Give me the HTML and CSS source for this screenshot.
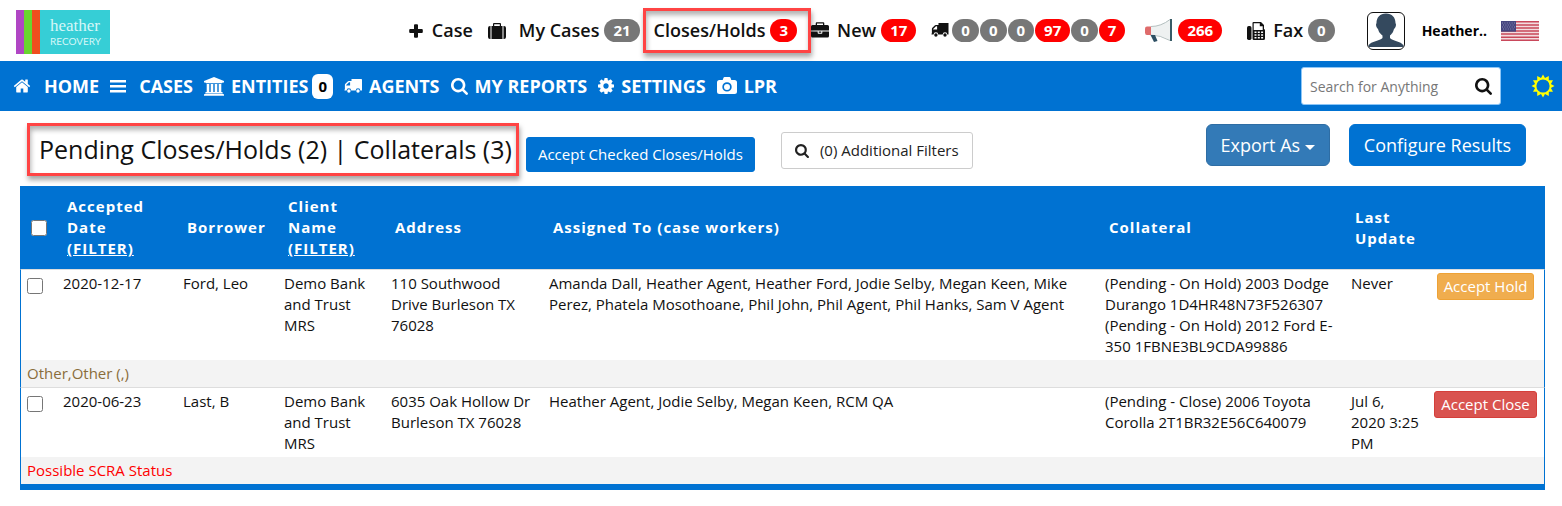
FILE: index.html
```html
<!DOCTYPE html>
<html lang="en">

<head>
<meta charset="UTF-8" />
<meta name="viewport" content="width=device-width, initial-scale=1.0" />
<title>Pending Closes/Holds</title>
<link rel="stylesheet" href="styles.css">
</head>

<body>
<header class="topbar">
<a href="#" class="logo">
<span class="stripe purple"></span><span class="stripe green"></span><span class="stripe orange"></span>
<span class="logo-text"><span class="logo-name">heather</span><span class="logo-sub">RECOVERY</span></span>
</a>

<div class="toplinks">
<a href="#" class="toplink add-case">
<svg width="14" height="14" viewBox="0 0 14 14"><path d="M5 1.200q0-1 1-1h2q1 0 1 1V5h3.800q1 0 1 1v2q0 1-1 1H9v3.800q0 1-1 1H6q-1 0-1-1V9H1.200q-1 0-1-1V6q0-1 1-1H5z"/></svg>
Case</a>
<a href="#" class="toplink my-cases">
<svg width="18" height="18" viewBox="0 0 18 18"><path d="M2.500 4v13H2q-2 0-2-2V6q0-2 2-2zM14.500 4v13h-11V4H5V2q0-1 1-1h6q1 0 1 1v2zM6.200 4h5.600V2.200H6.200zM18 6v9q0 2-2 2h-.5V4h.5q2 0 2 2z"/></svg>
<span>My Cases</span> <span class="badge">21</span></a>
<a href="#" class="toplink marked">Closes/Holds <span class="badge red">3</span></a>
<a href="#" class="toplink new-cases">
<svg width="18" height="18" viewBox="0 0 18 18"><path d="M6 3h6V1.600H6zm12 6.500V14q0 1.500-1.500 1.500h-15Q0 15.500 0 14V9.500h6.700V11q0 .7.700.7h3.200q.7 0 .7-.7V9.500zm-7.700 0v1.200H7.700V9.500zM18 4.600v3.900H0V4.600Q0 3 1.500 3h3.200V1.400Q4.700.3 5.700.3h6.600q1 0 1 1.100V3h3.200Q18 3 18 4.600z"/></svg>
<span>New</span> <span class="badge red">17</span></a>
<a href="#" class="toplink trucks">
<svg width="18" height="16" viewBox="0 0 18 16"><path d="M7.500 0h10v11.500h-1.200a2.300 2.300 0 0 0-4.600 0H7.200a2.300 2.300 0 0 0-4.600 0H.5v-1h.4V6q0-.7.5-1.200L4 2.300Q4.400 2 5 2h2.500zM2.200 6.500h3.900V3.300H5L2.200 6z" fill-rule="evenodd"/><circle cx="4.900" cy="12" r="1.700"/><circle cx="14" cy="12" r="1.700"/></svg>
<span class="badge">0</span><span class="badge">0</span><span class="badge">0</span><span class="badge red">97</span><span class="badge">0</span><span class="badge red">7</span></a>
<a href="#" class="toplink alerts">
<svg width="29" height="26" viewBox="0 0 29 26"><path d="M2 9q7 0 12-1.500T26 1.500v21Q19 18 14 17.500L2 17z" fill="#eef1f1"/><path d="M1 10.500Q1 8.500 3 8.500h4v8.500H3q-2 0-2-2.500z" fill="#df6b6b"/><path d="M7 8.500q10 0 19-7M7 17q9 0 19 5.500" fill="none" stroke="#b4c0c0"/><path d="M26 1h2v22h-2z" fill="#385b67"/><path d="M6.500 17h4.500l2.500 6-3.500 1z" fill="#2d4f63"/></svg>
<span class="badge red">266</span></a>
<a href="#" class="toplink fax">
<svg width="18" height="18" viewBox="0 0 18 18"><rect y="4" width="4.500" height="14" rx="1.700"/><path d="M5.500 1q0-1 1-1H14l3 3v4q1 .4 1 1.400v8.100q0 1.500-1.500 1.500H7q-1.500 0-1.500-1.500zm1.200.2V8h9V4.200h-2.900v-3zM7.500 9.500V11h2V9.500zm3.300 0V11h2V9.500zm3.300 0V11h2V9.500zm-6.600 2.800v1.500h2v-1.500zm3.300 0v1.500h2v-1.500zm3.300 0v1.500h2v-1.500zM7.500 15v1.500h2V15zm3.300 0v1.500h2V15zm3.300 0v1.500h2V15z" fill-rule="evenodd"/></svg>
<span>Fax</span> <span class="badge">0</span></a>
<a href="#" class="avatar" aria-label="Profile">
<svg width="36" height="36" viewBox="0 0 36 36"><path d="M18 .5c6 0 9.500 4 9.500 9.500l.5 1.500c0 2-1 4-2 4.500-1 4-2.500 5-4 6.500V25c2 3 11 3 13.500 7.500V33q0 1-1 1h-33q-1 0-1-1v-.5C3 28 12 28 14.500 25v-2.500C13 21 11 20 10 16c-1-.5-2-2.500-2-4.500L8.500 10C8.500 4.500 12 .5 18 .5z" fill="#34495e"/></svg>
</a>
<a href="#" class="user">Heather..</a>
<svg class="flag" width="38" height="20" viewBox="0 0 38 20"><path d="M0 0h38v20H0z" fill="#f3dcdf"/><path d="M0 .8h38M0 3.900h38M0 7h38M0 10h38M0 13.100h38M0 16.200h38M0 19.200h38" stroke="#c9485b" stroke-width="1.500"/><path d="M0 0h15v10.700H0z" fill="#46467f"/><path d="M1 2h13M2 4h12M1 6h13M2 8h12" stroke="#9c9cbf" stroke-width=".8" stroke-dasharray="1 1.400"/></svg>
</div>
</header>

<nav class="navbar">
<ul class="menu">
<li><a href="#" class="wide">
<svg width="18" height="18" viewBox="40 0 1712 1792"><path d="M1472 992v480q0 26-19 45t-45 19h-384v-384h-256v384h-384q-26 0-45-19t-19-45v-480q0-1 .5-3t.5-3l575-474 575 474q1 2 1 6zm223-69l-62 74q-8 9-21 11h-3q-13 0-21-7l-692-577-692 577q-12 8-24 7-13-2-21-11l-62-74q-8-10-7-23.500t11-21.500l719-599q32-26 76-26t76 26l244 204v-195q0-14 9-23t23-9h192q14 0 23 9t9 23v408l219 182q10 8 11 21.500t-7 23.500z"/></svg>
HOME</a></li>
<li><a href="#" class="wide">
<svg width="16" height="14" viewBox="0 0 16 14"><path d="M0 1h16v2.400H0zM0 6h16v2.400H0zM0 11h16v2.400H0z"/></svg>
CASES</a></li>
<li><a href="#">
<svg width="20" height="20" viewBox="0 0 20 20"><path d="M10 1l10 4v1.500h-1.500q0 .8-.8.800H2.300q-.8 0-.8-.8H0V5zM2.700 8h2.600v8h1.400V8h2.600v8h1.400V8h2.600v8h1.400V8h2.600v8h.6q.8 0 .8.800v.700H1.300v-.7q0-.8.8-.8h.6zM.8 18h18.400q.8 0 .8.800v.9H0v-.9q0-.8.800-.8z"/></svg>
ENTITIES</a><span class="count">0</span></li>
<li><a href="#">
<svg width="18" height="16" viewBox="0 0 18 16"><path d="M7.500 1h9.700q.8 0 .8.800v10.700h-1.700a2.300 2.300 0 0 0-4.600 0H7.200a2.300 2.300 0 0 0-4.600 0H.5v-1h.4V7q0-.7.5-1.200L4 3.300Q4.400 3 5 3h2.500zM2.200 7.500h3.900V4.300H5L2.200 7z" fill-rule="evenodd"/><circle cx="4.900" cy="13" r="1.700"/><circle cx="14" cy="13" r="1.700"/></svg>
AGENTS</a></li>
<li><a href="#">
<svg width="17" height="17" viewBox="64 128 1664 1664"><path d="M1216 832q0-185-131.500-316.500t-316.500-131.500-316.500 131.500-131.500 316.500 131.500 316.500 316.500 131.500 316.500-131.500 131.500-316.500zm512 832q0 52-38 90t-90 38q-54 0-90-38l-343-342q-179 124-399 124-143 0-273.500-55.500t-225-150-150-225-55.500-273.500 55.500-273.500 150-225 225-150 273.500-55.500 273.500 55.500 225 150 150 225 55.500 273.500q0 220-124 399l343 343q37 37 37 90z"/></svg>
MY REPORTS</a></li>
<li><a href="#">
<svg width="16" height="16" viewBox="128 128 1536 1536"><path d="M1152 896q0-106-75-181t-181-75-181 75-75 181 75 181 181 75 181-75 75-181zm512-109v222q0 12-8 23t-20 13l-185 28q-19 54-39 91 35 50 107 138 10 12 10 25t-9 23q-27 37-99 108t-94 71q-12 0-26-9l-138-108q-44 23-91 38-16 136-29 186-7 28-36 28h-222q-14 0-24.500-8.500t-11.500-21.500l-28-184q-49-16-90-37l-141 107q-10 9-25 9-14 0-25-11-126-114-165-168-7-10-7-23 0-12 8-23 15-21 51-66.500t54-70.500q-27-50-41-99l-183-27q-13-2-21-12.500t-8-23.500v-222q0-12 8-23t19-13l186-28q14-46 39-92-40-57-107-138-10-12-10-24 0-10 9-23 26-36 98.500-107.500t94.500-71.500q13 0 26 10l138 107q44-23 91-38 16-136 29-186 7-28 36-28h222q14 0 24.500 8.500t11.500 21.500l28 184q49 16 90 37l142-107q9-9 24-9 13 0 25 10 129 119 165 170 7 8 7 22 0 12-8 23-15 21-51 66.500t-54 70.500q26 50 41 98l183 28q13 2 21 12.500t8 23.500z"/></svg>
SETTINGS</a></li>
<li><a href="#">
<svg width="20" height="18" viewBox="0 0 20 18"><path d="M6.500.8Q6.800 0 7.600 0h4.800q.8 0 1.100.8L14.300 3h3.200Q20 3 20 5.500v9q0 2.500-2.500 2.500h-15Q0 17 0 14.500v-9Q0 3 2.500 3h3.200zM10 5.200a4.700 4.700 0 1 0 0 9.400 4.700 4.700 0 0 0 0-9.400zm0 1.700a3 3 0 1 1 0 6 3 3 0 0 1 0-6z" fill-rule="evenodd"/></svg>
LPR</a></li>
</ul>

<form class="search">
<input type="text" placeholder="Search for Anything" aria-label="Search for Anything">
<button type="button" aria-label="Search">
<svg width="17" height="17" viewBox="64 128 1664 1664"><path d="M1216 832q0-185-131.500-316.500t-316.500-131.500-316.500 131.500-131.500 316.500 131.500 316.500 316.500 131.500 316.500-131.500 131.500-316.500zm512 832q0 52-38 90t-90 38q-54 0-90-38l-343-342q-179 124-399 124-143 0-273.500-55.500t-225-150-150-225-55.500-273.500 55.500-273.500 150-225 225-150 273.500-55.500 273.500 55.500 225 150 150 225 55.500 273.500q0 220-124 399l343 343q37 37 37 90z"/></svg>
</button>
</form>
<a href="#" class="sun" aria-label="Theme">
<svg width="24" height="24" viewBox="0 0 24 24"><path d="M12 .5l2 3.600L17.800 2l0 4.200 4.200 0-2.100 3.800 3.600 2-3.600 2 2.100 3.800-4.200 0 0 4.200-3.800-2.100-2 3.600-2-3.600L6.200 22l0-4.200-4.200 0 2.100-3.800L.5 12l3.600-2L2 6.200l4.200 0 0-4.200L10 4.100zM12 5.400a6.600 6.600 0 1 0 0 13.200 6.600 6.600 0 0 0 0-13.200z" fill-rule="evenodd"/></svg>
</a>
</nav>

<main>
<div class="titlebar">
<h1>Pending Closes/Holds (2) | Collaterals (3)</h1>
<button class="btn accept-checked">Accept Checked Closes/Holds</button>
<button class="btn filters">
<svg width="14" height="14" viewBox="64 128 1664 1664"><path d="M1216 832q0-185-131.500-316.500t-316.500-131.500-316.500 131.500-131.500 316.500 131.500 316.500 316.500 131.500 316.500-131.500 131.500-316.500zm512 832q0 52-38 90t-90 38q-54 0-90-38l-343-342q-179 124-399 124-143 0-273.500-55.500t-225-150-150-225-55.500-273.500 55.500-273.500 150-225 225-150 273.500-55.500 273.500 55.500 225 150 150 225 55.500 273.500q0 220-124 399l343 343q37 37 37 90z"/></svg>
(0) Additional Filters</button>
<div class="actions">
<button class="btn large export">Export As <span class="caret"></span></button>
<button class="btn large">Configure Results</button>
</div>
</div>

<table class="results">
<colgroup>
<col class="c-check"><col class="c-date"><col class="c-borrower"><col class="c-client"><col class="c-address"><col><col class="c-collateral"><col class="c-update"><col class="c-action">
</colgroup>
<thead>
<tr>
<th><input type="checkbox" aria-label="Select all"></th>
<th>Accepted Date <a href="#">(FILTER)</a></th>
<th>Borrower</th>
<th>Client Name <a href="#">(FILTER)</a></th>
<th>Address</th>
<th>Assigned To (case workers)</th>
<th>Collateral</th>
<th>Last Update</th>
<th></th>
</tr>
</thead>
<tbody>
<tr class="case">
<td><input type="checkbox" aria-label="Select Ford, Leo"></td>
<td>2020-12-17</td>
<td>Ford, Leo</td>
<td>Demo Bank and Trust MRS</td>
<td>110 Southwood Drive Burleson TX 76028</td>
<td>Amanda Dall, Heather Agent, Heather Ford, Jodie Selby, Megan Keen, Mike Perez, Phatela Mosothoane, Phil John, Phil Agent, Phil Hanks, Sam V Agent</td>
<td>(Pending - On Hold) 2003 Dodge Durango 1D4HR48N73F526307<br>(Pending - On Hold) 2012 Ford E-350 1FBNE3BL9CDA99886</td>
<td>Never</td>
<td class="action"><button class="btn small hold">Accept Hold</button></td>
</tr>
<tr class="note">
<td colspan="9">Other,Other (,)</td>
</tr>
<tr class="case">
<td><input type="checkbox" aria-label="Select Last, B"></td>
<td>2020-06-23</td>
<td>Last, B</td>
<td>Demo Bank and Trust MRS</td>
<td>6035 Oak Hollow Dr Burleson TX 76028</td>
<td>Heather Agent, Jodie Selby, Megan Keen, RCM QA</td>
<td>(Pending - Close) 2006 Toyota Corolla 2T1BR32E56C640079</td>
<td>Jul 6, 2020 3:25 PM</td>
<td class="action"><button class="btn small close">Accept Close</button></td>
</tr>
<tr class="note alert">
<td colspan="9">Possible SCRA Status</td>
</tr>
</tbody>
</table>
</main>
</body>

</html>
```
FILE: styles.css
```css
* {
box-sizing: border-box;
}

body {
margin: 0;
background: #fff;
color: #111;
font-family: "Open Sans", sans-serif;
font-size: 15px;
line-height: 21px;
}

a {
color: inherit;
text-decoration: none;
}

svg {
display: block;
flex: none;
fill: currentColor;
}

button,
input {
font-family: inherit;
}

/* top bar */
.topbar {
display: flex;
align-items: center;
justify-content: space-between;
height: 61px;
padding: 0 23px 0 16px;
}

.logo {
display: flex;
width: 94px;
height: 44px;
margin-top: 3px;
background: #36ced6;
}

.stripe {
width: 8px;
}

.purple {
background: #b046c4;
}

.green {
background: #69d530;
}

.orange {
background: #f04e1e;
}

.logo-text {
display: flex;
flex-direction: column;
padding: 8px 0 0 10px;
color: #d5f7f8;
}

.logo-name {
font-family: "Liberation Serif", serif;
font-size: 17px;
line-height: 16px;
}

.logo-sub {
font-family: Lato, sans-serif;
font-size: 10px;
line-height: 14px;
}

.toplinks {
display: flex;
align-items: center;
}

.toplink {
display: flex;
align-items: center;
gap: 5px;
font-size: 18px;
font-weight: 600;
white-space: nowrap;
}

.add-case {
gap: 9px;
margin-right: 15px;
}

.my-cases svg {
margin-right: 8px;
}

.marked {
height: 45px;
margin-left: 3px;
padding: 0 11px 0 8px;
border: 3px solid #ff4444;
box-shadow: 1px 4px 5px rgba(0, 0, 0, .35), inset 1px 4px 5px rgba(0, 0, 0, .3);
}

.new-cases svg,
.fax svg {
margin-right: 3px;
}

.trucks {
gap: 1px;
margin: 0 19px 0 15px;
}

.trucks svg {
margin-right: 2px;
}

.fax {
margin-left: 25px;
}

.badge {
padding: 1px 9px;
border-radius: 12px;
background: #777;
color: #fff;
font-size: 15px;
font-weight: 700;
}

.red {
background: #f00;
}

.avatar {
margin-left: 32px;
border: 1px solid #111;
border-radius: 6px;
}

.user {
margin: 0 14px 0 17px;
color: #000;
font-size: 14px;
font-weight: 700;
}

/* main menu */
.navbar {
display: flex;
align-items: center;
height: 50px;
padding: 0 7px 0 13px;
background: #0072d2;
color: #fff;
}

.menu {
display: flex;
gap: 11px;
margin: 0;
padding: 0;
list-style: none;
font-size: 18px;
font-weight: 700;
}

.menu li,
.menu a {
display: flex;
align-items: center;
}

.menu a {
gap: 7px;
white-space: nowrap;
}

.menu .wide {
gap: 13px;
}

.count {
margin-left: 4px;
padding: 2px 6px;
border-radius: 6px;
background: #fff;
color: #000;
font-size: 15px;
}

.search {
display: flex;
width: 200px;
height: 38px;
margin-left: auto;
border: 1px solid #8cc6f7;
border-radius: 3px;
background: #fff;
}

.search input {
flex: 1;
min-width: 0;
padding: 0 8px;
border: 0;
background: none;
font-size: 14px;
}

.search input::placeholder {
color: #777;
}

.search button {
padding: 0 8px;
border: 0;
background: none;
color: #111;
cursor: pointer;
}

.sun {
margin-left: 30px;
color: #ff0;
}

/* title and buttons */
main {
padding: 0 17px 0 20px;
}

.titlebar {
display: flex;
align-items: flex-start;
height: 75px;
padding: 12px 19px 0 7px;
}

h1 {
margin: 0;
padding: 7px 4px 8px 9px;
border: 3px solid #ff4444;
box-shadow: 1px 4px 5px rgba(0, 0, 0, .35), inset 1px 4px 5px rgba(0, 0, 0, .3);
font-size: 25px;
font-weight: 400;
line-height: 32px;
white-space: nowrap;
}

.btn {
border: 1px solid #0072d2;
border-radius: 3px;
background: #0072d2;
color: #fff;
font-size: 15px;
line-height: 21px;
white-space: nowrap;
cursor: pointer;
}

.accept-checked {
margin: 14px 0 0 7px;
padding: 6px 11px;
}

.filters {
display: flex;
align-items: center;
gap: 11px;
margin: 9px 0 0 26px;
padding: 7px 13px;
border-color: #ccc;
background: #fff;
color: #222;
}

.actions {
display: flex;
gap: 19px;
margin: 1px 0 0 auto;
}

.large {
padding: 8px 14px;
border-radius: 6px;
font-size: 18px;
line-height: 24px;
}

.export {
border-color: #2e6da4;
background: #337ab7;
}

.caret {
display: inline-block;
border: 5px solid transparent;
border-top-color: #fff;
border-bottom: 0;
vertical-align: middle;
}

/* results */
.results {
width: 100%;
table-layout: fixed;
border-spacing: 0;
border-bottom: 6px solid #0072d2;
}

.c-check {
width: 36px;
}

.c-date {
width: 120px;
}

.c-borrower {
width: 101px;
}

.c-client {
width: 107px;
}

.c-address {
width: 158px;
}

.c-collateral {
width: 246px;
}

.c-update {
width: 83px;
}

.c-action {
width: 118px;
}

.results th {
padding: 10px 11px;
background: #0072d2;
color: #fff;
font-weight: 700;
letter-spacing: 1px;
text-align: left;
}

.results th a {
text-decoration: underline;
}

.results td {
padding: 3px 7px;
vertical-align: top;
}

.results td:first-child {
padding-left: 6px;
border-left: 1px solid #0072d2;
}

.results td:last-child {
border-right: 1px solid #0072d2;
}

.case td {
border-top: 1px solid #ddd;
}

.results input {
display: block;
width: 16px;
height: 16px;
margin: 0;
}

.case input {
margin-top: 5px;
}

.results .action {
padding: 3px 6px;
text-align: center;
}

.small {
padding: 2px 6px;
}

.hold {
border-color: #eea236;
background: #f0ad4e;
}

.close {
border-color: #d43f3a;
background: #d9534f;
}

.note td {
background: #f3f3f3;
color: #8a6d3b;
}

.alert td {
color: #f00;
}
```
